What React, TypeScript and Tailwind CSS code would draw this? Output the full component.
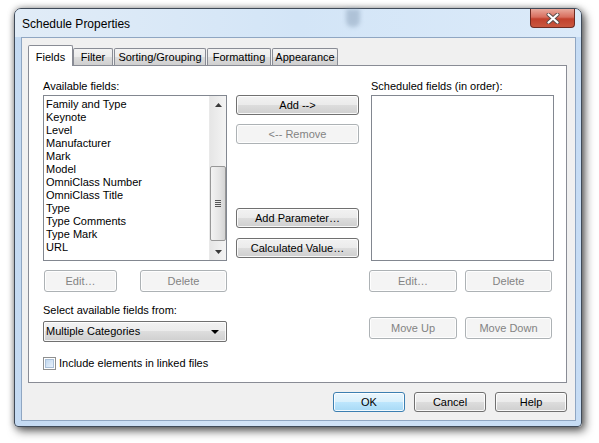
import React from "react";

const font = "font-['Liberation_Sans',Arial,sans-serif]";

function Btn({
  children,
  w,
  h = 20,
  disabled = false,
  primary = false,
  className = "",
}: {
  children: React.ReactNode;
  w: number;
  h?: number;
  disabled?: boolean;
  primary?: boolean;
  className?: string;
}) {
  const base =
    "flex items-center justify-center rounded-[3px] border text-[11px] leading-none shadow-[inset_0_0_0_1px_rgba(255,255,255,0.85)] ";
  const look = disabled
    ? "border-[#adb2b5] bg-[#f4f4f4] text-[#838383]"
    : primary
    ? "border-[#3c7fb1] bg-[linear-gradient(#eaf6fd_0%,#d9f0fc_50%,#bee6fd_50%,#a7d9f5_100%)] text-black"
    : "border-[#707070] bg-[linear-gradient(#f2f2f2_0%,#ebebeb_50%,#dddddd_50%,#cfcfcf_100%)] text-black";
  return (
    <div className={base + look + " " + className} style={{ width: w, height: h }}>
      {children}
    </div>
  );
}

const fields = [
  "Family and Type",
  "Keynote",
  "Level",
  "Manufacturer",
  "Mark",
  "Model",
  "OmniClass Number",
  "OmniClass Title",
  "Type",
  "Type Comments",
  "Type Mark",
  "URL",
];

function Scrollbar() {
  return (
    <div className="flex h-full w-[17px] flex-col bg-[linear-gradient(90deg,#e6e6e6,#f4f4f4)] border-l border-[#e9e9e9]">
      <div className="flex h-[17px] items-center justify-center">
        <svg width="7" height="4" viewBox="0 0 7 4">
          <path d="M3.5 0 L7 4 L0 4 Z" fill="#3a3a3a" />
        </svg>
      </div>
      <div className="h-[53px]" />
      <div className="flex h-[75px] items-center justify-center rounded-[2px] border border-[#979797] bg-[linear-gradient(90deg,#f3f3f3,#e4e4e4_60%,#d4d4d4)]">
        <div className="flex flex-col gap-[1px]">
          <div className="h-px w-[6px] bg-[#555]" />
          <div className="h-px w-[6px] bg-[#555]" />
          <div className="h-px w-[6px] bg-[#555]" />
          <div className="h-px w-[6px] bg-[#555]" />
        </div>
      </div>
      <div className="flex-1" />
      <div className="flex h-[17px] items-center justify-center">
        <svg width="7" height="4" viewBox="0 0 7 4">
          <path d="M0 0 L7 0 L3.5 4 Z" fill="#3a3a3a" />
        </svg>
      </div>
    </div>
  );
}

function Tab({ label, w, selected = false }: { label: string; w: number; selected?: boolean }) {
  if (selected)
    return (
      <div
        className="relative z-10 -mb-px flex h-[21px] items-start justify-center rounded-t-[2px] border border-b-0 border-[#898c95] bg-white pt-[3px] text-[11px]"
        style={{ width: w }}
      >
        {label}
      </div>
    );
  return (
    <div
      className="flex h-[17px] items-center justify-center rounded-t-[2px] border border-b-0 border-[#898c95] bg-[linear-gradient(#f3f3f3,#ebebeb_50%,#dddddd_50%,#cfcfcf)] text-[11px]"
      style={{ width: w }}
    >
      {label}
    </div>
  );
}

export default function App() {
  return (
    <div className={`h-[443px] w-[599px] overflow-hidden bg-white pl-[14px] pt-[8px] text-black ${font}`}>
      <div className="relative flex h-[419px] w-[568px] flex-col rounded-t-[7px] rounded-b-[4px] border border-[#3f4a58] bg-[linear-gradient(90deg,#c4daf2,#d2e3f6_40%,#c6dcf4)] shadow-[0_0_6px_rgba(0,0,0,0.35),3px_4px_10px_rgba(0,0,0,0.6)]">
        {/* title bar */}
        <div className="relative flex h-[28px] items-center bg-[linear-gradient(90deg,#e1ecf7,#d3e5f7_50%,#dbeaf9)] rounded-t-[6px] pl-[7px]">
          <span className="mt-[1px] text-[12px] text-black">Schedule Properties</span>
          <div className="absolute left-[331px] top-[0px] h-[18px] w-[14px] rounded-b-[6px] bg-[#8aa0b8] opacity-50 blur-[2px]" />
          <div className="absolute right-[6px] top-[0px] flex h-[19px] w-[45px] items-center justify-center rounded-b-[4px] border border-t-0 border-[#6e2b22] bg-[linear-gradient(#e9a99c,#d86e5e_45%,#c2412d_55%,#c9573f)]">
            <svg width="14" height="11" viewBox="0 0 14 11">
              <path d="M2.5 1.5 L11.5 9.5 M11.5 1.5 L2.5 9.5" stroke="#5a4a48" strokeWidth="4" strokeLinecap="round" />
              <path d="M2.5 1.5 L11.5 9.5 M11.5 1.5 L2.5 9.5" stroke="#ffffff" strokeWidth="2.2" strokeLinecap="round" />
            </svg>
          </div>
        </div>
        {/* client area */}
        <div className="ml-[6px] flex h-[384px] w-[555px] flex-col border border-[#8fa6c2] bg-[#f0f0f0] pl-[6px] pt-[7px]">
          {/* tabs */}
          <div className="flex h-[20px] items-end">
            <Tab label="Fields" w={45} selected />
            <Tab label="Filter" w={40} />
            <div className="w-px" />
            <Tab label="Sorting/Grouping" w={92} />
            <div className="w-px" />
            <Tab label="Formatting" w={64} />
            <div className="w-px" />
            <Tab label="Appearance" w={66} />
          </div>
          {/* panel */}
          <div className="flex h-[318px] w-[539px] border border-[#898c95] bg-white text-[11px]">
            {/* left column */}
            <div className="ml-[14px] flex w-[184px] flex-col pt-[13px]">
              <div className="h-[14px] leading-[14px]">Available fields:</div>
              <div className="mt-[2px] flex h-[166px] border border-[#828790] bg-white">
                <div className="flex-1 pl-[2px] pt-[2px]">
                  {fields.map((f) => (
                    <div key={f} className="h-[13px] leading-[13px]">
                      {f}
                    </div>
                  ))}
                </div>
                <Scrollbar />
              </div>
              <div className="mt-[9px] flex h-[22px]">
                <Btn w={73} h={22} disabled className="ml-px">
                  Edit…
                </Btn>
                <div className="flex-1" />
                <Btn w={87} h={22} disabled>
                  Delete
                </Btn>
              </div>
              <div className="mt-[11px] h-[14px] leading-[14px]">Select available fields from:</div>
              <div className="mt-[4px] flex h-[21px] items-center justify-between rounded-[2px] border border-[#707070] bg-[linear-gradient(#f2f2f2,#ebebeb_50%,#dddddd_50%,#cfcfcf)] pl-[2px] pr-[7px] shadow-[inset_0_0_0_1px_rgba(255,255,255,0.8)]">
                <span>Multiple Categories</span>
                <svg width="8" height="4" viewBox="0 0 8 4">
                  <path d="M0 0 L8 0 L4 4 Z" fill="#000" />
                </svg>
              </div>
              <div className="mt-[15px] flex h-[13px] items-center">
                <div className="h-[13px] w-[13px] border border-[#8e8f8f] bg-white p-[1px]">
                  <div className="h-full w-full bg-[linear-gradient(135deg,#c2d8ee,#e8f1fb)] border border-[#aac0d8]" />
                </div>
                <span className="ml-[3px]">Include elements in linked files</span>
              </div>
            </div>
            {/* middle column */}
            <div className="ml-[9px] flex w-[123px] flex-col pt-[29px]">
              <Btn w={123}>Add --&gt;</Btn>
              <Btn w={123} disabled className="mt-[9px]">
                &lt;-- Remove
              </Btn>
              <Btn w={123} className="mt-[64px]">
                Add Parameter…
              </Btn>
              <Btn w={123} className="mt-[10px]">
                Calculated Value…
              </Btn>
            </div>
            {/* right column */}
            <div className="ml-[10px] flex w-[185px] flex-col pt-[13px]">
              <div className="ml-[2px] h-[14px] leading-[14px]">Scheduled fields (in order):</div>
              <div className="ml-[2px] mt-[2px] h-[166px] w-[183px] border border-[#828790] bg-white" />
              <div className="mt-[9px] flex h-[22px] w-[183px]">
                <Btn w={88} h={22} disabled>
                  Edit…
                </Btn>
                <div className="flex-1" />
                <Btn w={87} h={22} disabled>
                  Delete
                </Btn>
              </div>
              <div className="mt-[25px] flex h-[22px] w-[183px]">
                <Btn w={88} h={22} disabled>
                  Move Up
                </Btn>
                <div className="flex-1" />
                <Btn w={87} h={22} disabled>
                  Move Down
                </Btn>
              </div>
            </div>
          </div>
          {/* bottom buttons */}
          <div className="mt-[9px] flex w-[539px] justify-end gap-[9px] text-[11px]">
            <Btn w={72} primary>
              OK
            </Btn>
            <Btn w={72}>Cancel</Btn>
            <Btn w={72}>Help</Btn>
          </div>
        </div>
      </div>
    </div>
  );
}
